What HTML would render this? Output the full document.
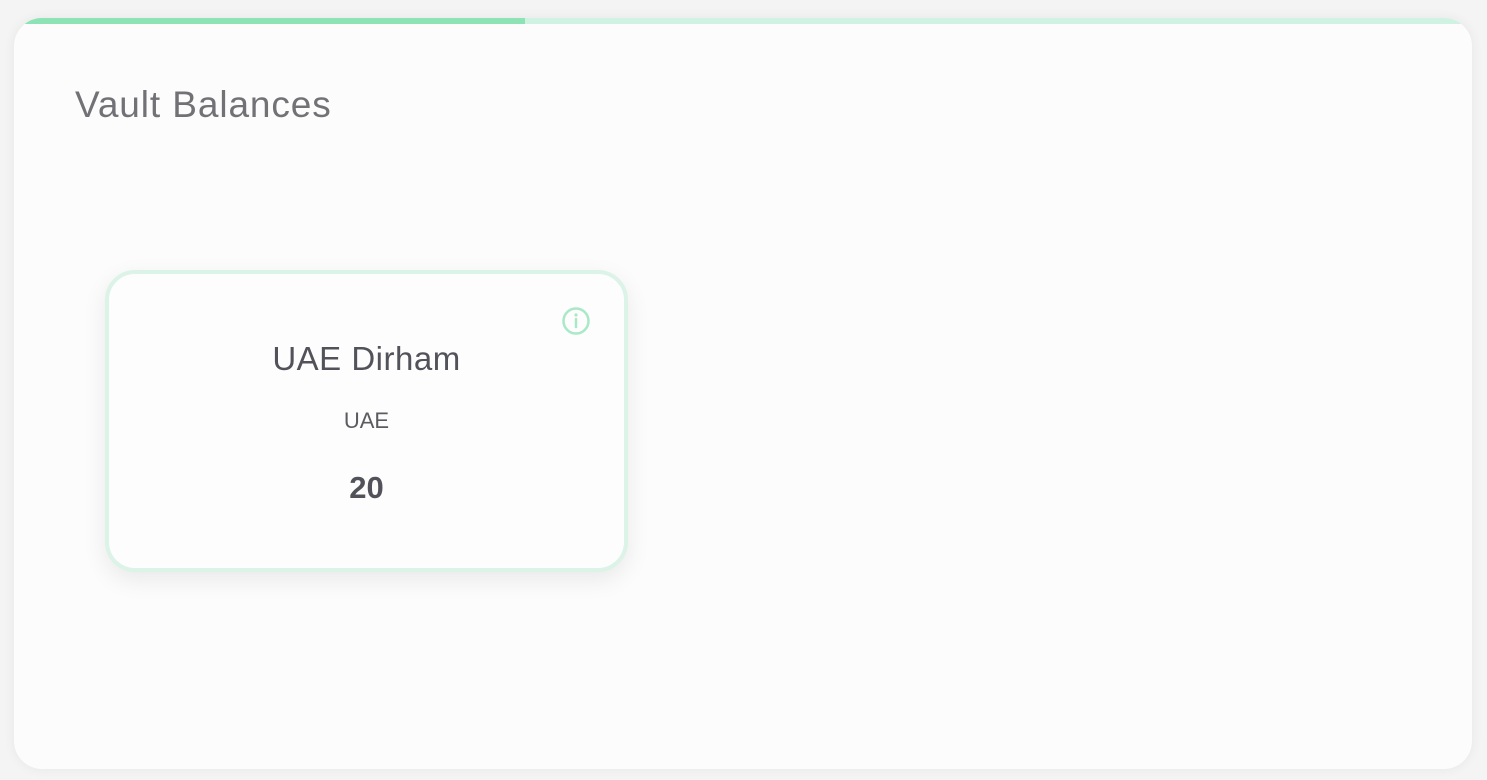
<!DOCTYPE html>
<html><head><style>
html,body{margin:0;padding:0;background:#f4f4f4;width:1487px;height:780px;overflow:hidden;font-family:"Liberation Sans",sans-serif}
.outer{position:absolute;left:14px;top:18px;width:1458px;height:751px;background:#fcfcfc;border-radius:28px;overflow:hidden;box-shadow:0 0 12px rgba(0,0,0,0.06)}
.bar{position:absolute;left:0;top:0;height:6px;width:100%;background:#cff2e3}
.bar i{position:absolute;left:0;top:0;height:6px;width:511px;background:#8de2b6}
h1{position:absolute;left:61px;top:66px;margin:0;font-weight:normal;font-size:37px;color:#727276;letter-spacing:0.9px}
.card{position:absolute;left:105px;top:270px;width:515px;height:294px;border:4px solid #dcf3e8;border-radius:30px;background:#fdfdfd;box-shadow:0 8px 24px rgba(0,0,0,0.08)}
.t{position:absolute;left:0;width:100%;text-align:center;color:#52535a}
</style></head><body>
<div class="outer"><div class="bar"><i></i></div><h1>Vault Balances</h1></div>
<div class="card">
<svg style="position:absolute;left:453px;top:33px" width="28" height="28" viewBox="0 0 28 28"><circle cx="14" cy="14" r="12.5" fill="none" stroke="#a9e9c8" stroke-width="2.5"/><line x1="14" y1="12" x2="14" y2="20" stroke="#a9e9c8" stroke-width="2.5" stroke-linecap="round"/><circle cx="14" cy="8" r="1.6" fill="#a9e9c8"/></svg>
<div class="t" style="top:66px;font-size:33px;letter-spacing:0.5px">UAE Dirham</div>
<div class="t" style="top:134px;font-size:22px;color:#5b5c62">UAE</div>
<div class="t" style="top:196px;font-size:31px;font-weight:bold">20</div>
</div>
</body></html>
